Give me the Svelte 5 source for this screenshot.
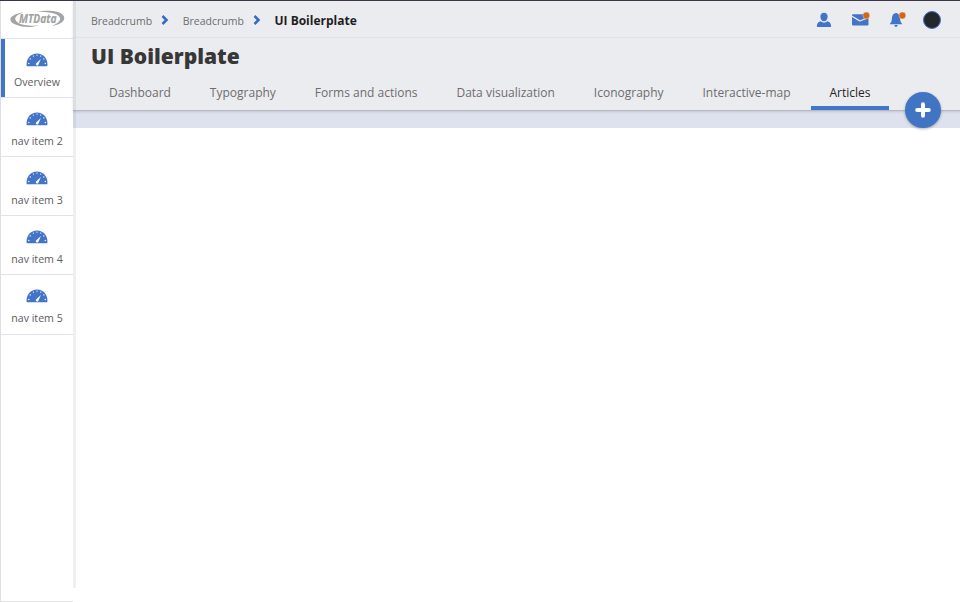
<script>
  const navItems = ['Overview', 'nav item 2', 'nav item 3', 'nav item 4', 'nav item 5'];
  const tabs = ['Dashboard', 'Typography', 'Forms and actions', 'Data visualization', 'Iconography', 'Interactive-map', 'Articles'];
  const crumbs = ['Breadcrumb', 'Breadcrumb'];
  let activeNav = $state('Overview');
  let activeTab = $state('Articles');
</script>

<div class="app">
  <aside>
    <div class="logo">
      <svg width="56" height="20" viewBox="0 0 56 20">
        <path d="M14 3.200C0 5 -4 11.500 5.500 15.500C13 18.800 22 18.600 29 16.200C21 17.500 13 16.500 8.500 14C2.500 10.500 5 6 14 3.200Z" fill="#a4a4a4" />
        <path d="M26 3C36 .8 49 1.500 53 6C57 11 51 15.500 42 16.800C51 13.500 52.500 8.500 46.500 5.500C41.500 3.300 33 2.500 26 3Z" fill="#a4a4a4" />
        <text x="9" y="14" textLength="37.500" lengthAdjust="spacingAndGlyphs">MTData</text>
      </svg>
    </div>
    <nav>
      {#each navItems as item}
        <button class="nav-item" class:active={activeNav === item} onclick={() => (activeNav = item)}>
          <svg width="22" height="14" viewBox="0 0 22 14">
            <path d="M.7 13.200C-.2 6.500 3.800 .4 11 .4S22.200 6.500 21.300 13.200Z" fill="#4274c8" />
            <g fill="#fff">
              <circle cx="2.800" cy="10.500" r=".7" /><circle cx="4.300" cy="5.900" r=".7" />
              <circle cx="7.400" cy="3.100" r=".65" /><circle cx="11" cy="2.100" r=".65" />
              <circle cx="14.700" cy="3.100" r=".65" /><circle cx="17.800" cy="5.900" r=".7" />
              <circle cx="19.300" cy="10.500" r=".7" />
              <path d="M14.900 6L12.600 11.300A1.400 1.400 0 1 1 10.600 9.900Z" />
            </g>
          </svg>
          <span>{item}</span>
        </button>
      {/each}
    </nav>
  </aside>
  <div class="edge"></div>
  <main>
    <header>
      <div class="topbar">
        <div class="crumbs">
          {#each crumbs as crumb}
            <span>{crumb}</span>
            <svg width="8" height="10" viewBox="0 0 8 10"><path d="M1.500 1L5.500 5L1.500 9" fill="none" stroke="#3269c6" stroke-width="2.500" /></svg>
          {/each}
          <strong>UI Boilerplate</strong>
        </div>
        <div class="actions">
          <svg width="16" height="16" viewBox="0 0 16 16" fill="#4274c8"><path d="M8 .8C5.600 .8 4.300 2.500 4.400 4.700C4.500 7.500 6 9.300 8 9.300S11.500 7.500 11.600 4.700C11.700 2.500 10.400 .8 8 .8Z" /><path d="M.9 15C.9 11.500 1.800 10.300 4.700 9.300Q8 12 11.300 9.300C14.200 10.300 15.100 11.500 15.100 15Z" /></svg>
          <svg width="18" height="16" viewBox="0 0 18 16"><path d="M0 3.200Q0 2.200 1 2.200H16.500V12.500Q16.500 13.500 15.500 13.500H1Q0 13.500 0 12.500Z" fill="#4274c8" /><path d="M0 4.300L7.300 8.600Q8.200 9 9.100 8.500L16.500 5.500" fill="none" stroke="#ebecf0" stroke-width="1.200" /><circle cx="14.300" cy="3.500" r="3.400" fill="#d9640b" stroke="#ebecf0" stroke-width=".4" /></svg>
          <svg width="18" height="16" viewBox="0 0 18 16"><path d="M7 1.100C3.800 1.700 3 4 2.900 7C2.800 9.300 1.900 10.800 .7 12.200H13.300C12.100 10.800 11.200 9.300 11.100 7C11 4 10.200 1.700 7 1.100ZM5.300 13H8.700Q8.400 15 7 15T5.300 13Z" fill="#4274c8" /><circle cx="13.400" cy="3.500" r="3.400" fill="#d9640b" stroke="#ebecf0" stroke-width=".4" /></svg>
          <span class="avatar"></span>
        </div>
      </div>
      <h1>UI Boilerplate</h1>
      <div class="tabs">
        {#each tabs as tab}
          <button class:active={activeTab === tab} onclick={() => (activeTab = tab)}>{tab}</button>
        {/each}
      </div>
      <button class="add" aria-label="Add">
        <svg width="16" height="16" viewBox="0 0 16 16"><path d="M8 2.200V13.800M2.200 8H13.800" stroke="#fff" stroke-width="4" stroke-linecap="round" /></svg>
      </button>
    </header>
    <div class="band"></div>
  </main>
</div>

<style>
  :global(body) { margin: 0; background: #fff; }
  * { box-sizing: border-box; }
  .app { display: flex; width: 960px; height: 602px; border-top: 1px solid #393544; background: #fff; font-family: "Open Sans", "Noto Sans", sans-serif; overflow: hidden; }
  button { border: 0; margin: 0; padding: 0; background: none; font: inherit; cursor: pointer; }
  svg { display: block; flex: none; }
  aside { width: 73px; flex: none; border-left: 1px solid #dedee2; border-bottom: 1px solid #e2e2e2; }
  .logo { height: 37px; padding: 8px 0 0 8.500px; }
  .logo text { font: italic bold 12.500px "Open Sans", sans-serif; fill: #a2a2a2; stroke: #a2a2a2; stroke-width: .2px; }
  nav { border-top: 1px solid #e0e2ee; }
  .nav-item { width: 72px; height: 59.120px; display: flex; flex-direction: column; align-items: center; padding-top: 14px; border-bottom: 1px solid #e0e2ee; color: #5c5c5c; font-size: 10.600px; line-height: 15px; }
  .nav-item span { margin-top: 8px; }
  .nav-item.active { box-shadow: inset 4px 0 #4274c8; }
  .edge { width: 3px; height: 587px; flex: none; margin-right: -3px; background: rgba(60, 60, 70, .08); z-index: 1; }
  main { flex: 1; min-width: 0; }
  header { position: relative; height: 110px; background: #ebecf0; border-bottom: 1px solid #b6b8c2; box-shadow: 0 1px 2px rgba(60, 65, 90, .18); }
  .topbar { height: 37px; display: flex; justify-content: space-between; align-items: center; padding: 0 19px 0 18px; border-bottom: 1px solid #dfe2ec; }
  .crumbs { display: flex; align-items: center; padding-top: 3px; color: #6d6d6d; font-size: 10.500px; line-height: 16px; }
  .crumbs svg { margin: -1px 13.600px 0 9px; }
  .crumbs strong { color: #1e1e21; font-size: 12px; font-weight: 700; }
  .actions { display: flex; align-items: center; padding-top: 1px; }
  .actions svg:nth-child(1) { margin-right: 20px; }
  .actions svg:nth-child(2) { margin-right: 19px; }
  .actions svg:nth-child(3) { margin-right: 16px; }
  .avatar { width: 18px; height: 18px; border-radius: 50%; background: #25282a; border: 1.500px solid #3d70c6; }
  h1 { margin: 0; padding: 4px 0 0 18px; height: 38px; color: #373737; font-size: 21px; line-height: 29px; font-weight: 800; }
  .tabs { display: flex; gap: 2.930px; padding-left: 18px; height: 34px; }
  .tabs button { padding: 2px 18px 0; color: #6d6d6d; font-size: 12px; border-bottom: 4px solid transparent; }
  .tabs button.active { color: #242426; border-color: #4274c8; }
  .add { position: absolute; right: 19px; bottom: -18px; width: 36px; height: 36px; border-radius: 50%; background: #4274c4; display: flex; align-items: center; justify-content: center; box-shadow: 0 1px 3px rgba(0, 0, 0, .3); z-index: 2; }
  .band { height: 17px; background: #dee2ee; }
</style>
